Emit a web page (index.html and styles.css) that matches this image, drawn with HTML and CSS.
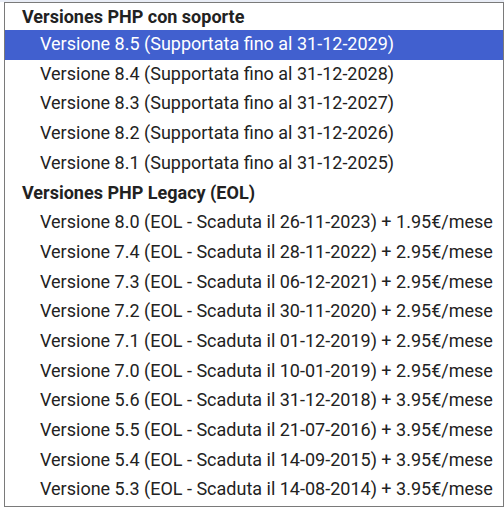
FILE: index.html
```html
<!DOCTYPE html>
<html>
<head>
<meta charset="utf-8">
<link rel="stylesheet" href="styles.css">
</head>
<body>
<div class="page">
  <div class="dropdown">
    <div class="group first">Versiones PHP con soporte</div>
    <div class="opt selected">Versione 8.5 (Supportata fino al 31-12-2029)</div>
    <div class="opt">Versione 8.4 (Supportata fino al 31-12-2028)</div>
    <div class="opt">Versione 8.3 (Supportata fino al 31-12-2027)</div>
    <div class="opt">Versione 8.2 (Supportata fino al 31-12-2026)</div>
    <div class="opt">Versione 8.1 (Supportata fino al 31-12-2025)</div>
    <div class="group">Versiones PHP Legacy (EOL)</div>
    <div class="opt">Versione 8.0 (EOL - Scaduta il 26-11-2023) + 1.95€/mese</div>
    <div class="opt">Versione 7.4 (EOL - Scaduta il 28-11-2022) + 2.95€/mese</div>
    <div class="opt">Versione 7.3 (EOL - Scaduta il 06-12-2021) + 2.95€/mese</div>
    <div class="opt">Versione 7.2 (EOL - Scaduta il 30-11-2020) + 2.95€/mese</div>
    <div class="opt">Versione 7.1 (EOL - Scaduta il 01-12-2019) + 2.95€/mese</div>
    <div class="opt">Versione 7.0 (EOL - Scaduta il 10-01-2019) + 2.95€/mese</div>
    <div class="opt">Versione 5.6 (EOL - Scaduta il 31-12-2018) + 3.95€/mese</div>
    <div class="opt">Versione 5.5 (EOL - Scaduta il 21-07-2016) + 3.95€/mese</div>
    <div class="opt">Versione 5.4 (EOL - Scaduta il 14-09-2015) + 3.95€/mese</div>
    <div class="opt">Versione 5.3 (EOL - Scaduta il 14-08-2014) + 3.95€/mese</div>
  </div>
</div>
</body>
</html>
```
FILE: styles.css
```css
html, body {
  margin: 0;
  padding: 0;
  background: #ffffff;
}
.page {
  width: 504px;
  height: 509px;
  padding: 2px 0 0 4px;
  box-sizing: border-box;
  background: linear-gradient(#e9edf6 0 2px, #ffffff 2px);
  overflow: hidden;
}
.dropdown {
  width: 500px;
  height: 505px;
  box-sizing: border-box;
  border: 1px solid #7a7a7a;
  background: #ffffff;
  display: flex;
  flex-direction: column;
  font-family: Roboto, "Liberation Sans", sans-serif;
  font-size: 18px;
  color: #222222;
  overflow: hidden;
}
.group {
  height: 29.7px;
  line-height: 29px;
  padding-left: 17px;
  font-weight: 700;
  flex: none;
  box-sizing: border-box;
}
.group.first {
  height: 27px;
  line-height: 28px;
}
.opt {
  height: 29.7px;
  line-height: 28px;
  padding-left: 35px;
  flex: none;
  white-space: nowrap;
  box-sizing: border-box;
}
.opt.selected {
  background: #4160cf;
  color: #ffffff;
}
```
